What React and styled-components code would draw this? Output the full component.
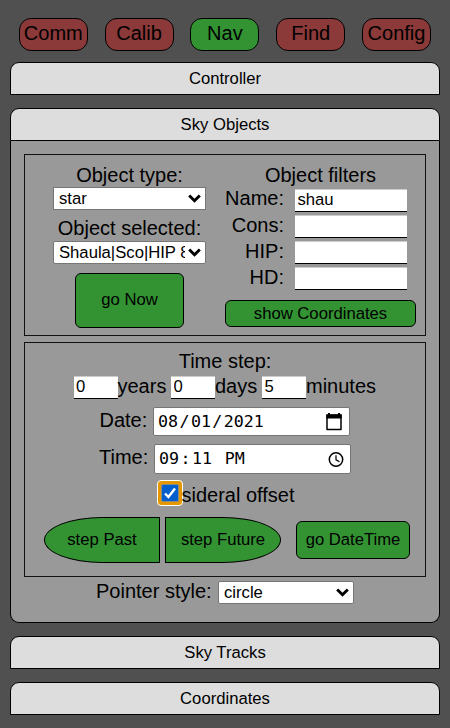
import React from "react";
import styled, { createGlobalStyle } from "styled-components";

const Global = createGlobalStyle`
  * { box-sizing: border-box; }
  body {
    margin: 0;
    background: #505050;
    color: #000;
    font: 20px/23px "Liberation Sans", Arial, sans-serif;
    overflow: hidden;
  }
`;

const Page = styled.main`
  width: 450px;
  height: 728px;
  padding: 18px 10px 0;
  overflow: hidden;
`;

const Tabs = styled.nav`
  display: grid;
  grid-template-columns: repeat(5, 85.8px);
  justify-items: center;
  height: 44px;
  padding-left: 0.4px;
`;

const Tab = styled.button`
  width: 69px;
  height: 33px;
  padding: 0 0 3px;
  border: 1px solid #000;
  border-radius: 12px;
  background: ${(p) => (p.$active ? "#339333" : "#8b3939")};
  color: #000;
  font: inherit;
  white-space: nowrap;
  display: flex;
  align-items: center;
  justify-content: center;
`;

const Section = styled.section`
  margin-bottom: 13px;
`;

const Header = styled.h2`
  margin: 0;
  height: 33px;
  border: 1px solid #000;
  border-radius: 9px 9px 0 0;
  background: #ddd;
  font-size: 16.67px;
  font-weight: 400;
  line-height: 31px;
  text-align: center;
`;

const Body = styled.div`
  height: 482px;
  padding: 13px 13px 0;
  border: 1px solid #000;
  border-top: 0;
  border-radius: 0 0 9px 9px;
  background: #999;
`;

const ObjectBox = styled.div`
  display: grid;
  grid-template-columns: 209px 191px;
  height: 182px;
  border: 1px solid #111;
`;

const Column = styled.div`
  display: flex;
  flex-direction: column;
  align-items: center;
  width: ${(p) => p.$w}px;
  margin-left: ${(p) => p.$ml || 0}px;
  padding-top: 9px;
`;

const Label = styled.div`
  height: ${(p) => p.$h || 23}px;
  line-height: ${(p) => p.$lh || 23}px;
  white-space: nowrap;
`;

const SelectBox = styled.div`
  display: flex;
  align-items: center;
  justify-content: space-between;
  width: ${(p) => p.$w}px;
  height: 23px;
  padding: 0 4px 0 5px;
  margin-bottom: ${(p) => p.$mb || 0}px;
  border: 1px solid #767676;
  border-radius: ${(p) => p.$r ?? 2}px;
  background: #fff;
  font-size: 16.67px;
  line-height: 21px;
`;

const SelectText = styled.span`
  flex: 1;
  overflow: hidden;
  white-space: nowrap;
  margin-right: 3px;
`;

const Button = styled.button`
  width: ${(p) => p.$w}px;
  height: ${(p) => p.$h}px;
  margin: ${(p) => p.$m || 0};
  padding: ${(p) => p.$p || 0};
  border: 1px solid #000;
  border-radius: ${(p) => p.$r || "6px"};
  background: #339333;
  color: #000;
  font: 16.67px/19px "Liberation Sans", Arial, sans-serif;
  white-space: nowrap;
`;

const Filters = styled.div`
  display: grid;
  grid-template-columns: 59px 112px;
  grid-auto-rows: 26px;
  column-gap: 11px;
  justify-items: end;
  width: 100%;
`;

const Input = styled.input`
  width: ${(p) => p.$w}px;
  height: 23px;
  padding: 0 2.5px 1px;
  border: 0;
  border-top: 1px solid #ccc;
  border-bottom: 1px solid #000;
  border-radius: 0;
  outline: 0;
  background: #fff;
  color: #000;
  font: 16.67px/19px "Liberation Sans", Arial, sans-serif;
`;

const TimeBox = styled.div`
  height: 235px;
  margin-top: 6px;
  padding-top: 7px;
  border: 1px solid #111;
  text-align: center;
`;

const Steps = styled.div`
  display: flex;
  height: 31px;
  margin-top: 3px;
  padding-left: 48.5px;
  white-space: pre;
`;

const Unit = styled.span`
  line-height: 20px;
  width: ${(p) => p.$w}px;
  text-align: left;
`;

const Field = styled.div`
  display: flex;
  height: 37px;
  padding-left: ${(p) => p.$pl}px;
`;

const FieldLabel = styled.span`
  width: ${(p) => p.$w}px;
  line-height: 27px;
  text-align: left;
  white-space: nowrap;
`;

const Picker = styled.div`
  display: flex;
  align-items: center;
  justify-content: space-between;
  width: 197px;
  height: ${(p) => p.$h}px;
  padding: 0 5px 0 4px;
  border: 1px solid #767676;
  border-radius: 2px;
  background: #fff;
  font: 16.67px/20px "DejaVu Sans Mono", monospace;
  white-space: pre;
`;

const Digits = styled.span`
  display: flex;
  gap: 1.4px;
`;

const Sidereal = styled.label`
  display: flex;
  height: 36px;
  padding-left: 132px;
  line-height: 28px;
`;

const Check = styled.span`
  display: flex;
  align-items: center;
  justify-content: center;
  width: 26px;
  height: 26px;
  margin: -1px -1.5px 0 0;
  border: 1px solid #fff;
  border-radius: 4px;
  background: #e59700;
`;

const CheckFace = styled.span`
  display: flex;
  width: 18px;
  height: 18px;
  border: 1px solid #8a8a80;
  border-radius: 2px;
  background: #005fcc;
`;

const Actions = styled.div`
  display: flex;
  padding-left: 19px;
`;

const Pointer = styled.div`
  display: flex;
  padding: 4px 0 0 72px;
`;

const PointerLabel = styled.span`
  width: 122px;
  line-height: 20px;
  white-space: nowrap;
`;

const Chevron = () => (
  <svg width="13" height="9" viewBox="0 0 13 9">
    <path d="M1.2 1.5 6.5 6.8 11.8 1.5" fill="none" stroke="#000" strokeWidth="2.9" />
  </svg>
);

const Calendar = () => (
  <svg width="20" height="20" viewBox="0 0 20 20">
    <path d="M3 3H17V17.5H3Z" fill="none" stroke="#000" strokeWidth="1.5" strokeLinejoin="round" />
    <path d="M2.3 2.5H17.7V6.5H2.3ZM4 1H6V3H4ZM14 1H16V3H14Z" />
  </svg>
);

const Clock = () => (
  <svg width="18" height="18" viewBox="0 0 18 18" fill="none" stroke="#000">
    <circle cx="9" cy="9.5" r="6.7" strokeWidth="1.5" />
    <path d="M9 5.3V9.8L12.5 11.8" strokeWidth="1.2" />
  </svg>
);

const Select = ({ children, ...props }) => (
  <SelectBox {...props}>
    <SelectText>{children}</SelectText>
    <Chevron />
  </SelectBox>
);

const tabs = ["Comm", "Calib", "Nav", "Find", "Config"];
const filters = [["Name:", "shau", 19], ["Cons:", "", 21], ["HIP:", "", 21], ["HD:", "", 21]];

export default function App() {
  return (
    <>
      <Global />
      <Page>
        <Tabs>
          {tabs.map((t) => <Tab key={t} $active={t === "Nav"}>{t}</Tab>)}
        </Tabs>
        <Section><Header>Controller</Header></Section>
        <Section>
          <Header>Sky Objects</Header>
          <Body>
            <ObjectBox>
              <Column $w={209}>
                <Label>Object type:</Label>
                <Select $w={153} $mb={7} $r={0}>star</Select>
                <Label $h={24}>Object selected:</Label>
                <Select $w={153}>Shaula|Sco|HIP 85927</Select>
                <Button $w={109} $h={55} $m="9px 0 0" $p="0 0 2px">go Now</Button>
              </Column>
              <Column $w={191} $ml={-9}>
                <Label $h={25}>Object filters</Label>
                <Filters>
                  {filters.map(([name, value, lineHeight]) => (
                    <React.Fragment key={name}>
                      <Label $lh={lineHeight}>{name}</Label>
                      <Input $w={112} defaultValue={value} />
                    </React.Fragment>
                  ))}
                </Filters>
                <Button $w={191} $h={27} $m="7px 0 0">show Coordinates</Button>
              </Column>
            </ObjectBox>
            <TimeBox>
              <Label>Time step:</Label>
              <Steps>
                <Input $w={44} defaultValue="0" /><Unit $w={53.5}>years </Unit>
                <Input $w={44} defaultValue="0" /><Unit $w={47}>days </Unit>
                <Input $w={44} defaultValue="5" /><Unit $w={72}>minutes</Unit>
              </Steps>
              <Field $pl={74.5}>
                <FieldLabel $w={53.5}>Date:</FieldLabel>
                <Picker $h={29}>
                  <Digits><span>08</span><span>/</span><span>01</span><span>/</span><span>2021</span></Digits>
                  <Calendar />
                </Picker>
              </Field>
              <Field $pl={74}>
                <FieldLabel $w={55}>Time:</FieldLabel>
                <Picker $h={30}>
                  <Digits><span>09</span><span>:</span><span>11</span><span> </span><span>PM</span></Digits>
                  <Clock />
                </Picker>
              </Field>
              <Sidereal>
                <Check>
                  <CheckFace>
                    <svg width="16" height="16" viewBox="0 0 16 16">
                      <path d="M3 8.5 6.4 12 13 3.5" fill="none" stroke="#fff" strokeWidth="2.4" />
                    </svg>
                  </CheckFace>
                </Check>
                sideral offset
              </Sidereal>
              <Actions>
                <Button $w={116} $h={46} $r="50% 0 0 50%" $p="0 0 2px">step Past</Button>
                <Button $w={116} $h={46} $r="0 50% 50% 0" $m="0 0 0 5px" $p="0 0 2px">step Future</Button>
                <Button $w={114} $h={38} $m="4px 0 0 15px" $p="0 0 2px">go DateTime</Button>
              </Actions>
            </TimeBox>
            <Pointer>
              <PointerLabel>Pointer style:</PointerLabel>
              <Select $w={136}>circle</Select>
            </Pointer>
          </Body>
        </Section>
        <Section><Header>Sky Tracks</Header></Section>
        <Section><Header>Coordinates</Header></Section>
      </Page>
    </>
  );
}
